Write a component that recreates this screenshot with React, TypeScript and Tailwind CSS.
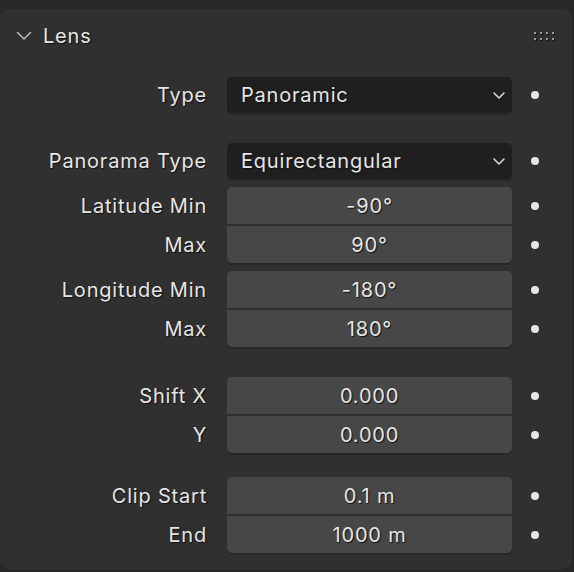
import React from 'react';

type Row = { label: string; value: string };

const font = { fontFamily: 'Inter, "Noto Sans", sans-serif' };

function Dot() {
  return (
    <div className="flex w-[60px] items-center pl-[19px]">
      <div className="h-[8px] w-[8px] rounded-full bg-[#e6e6e6]" />
    </div>
  );
}

function Label({ text }: { text: string }) {
  return (
    <div className="flex w-[227px] shrink-0 items-center justify-end pr-[20px] text-[20px] tracking-[0.8px] text-[#e6e6e6] [text-shadow:1px_1px_1px_#111]">
      {text}
    </div>
  );
}

function EnumRow({ label, value }: { label: string; value: string }) {
  return (
    <div className="flex h-[36px]">
      <Label text={label} />
      <div className="flex w-[286px] items-center justify-between rounded-[5px] bg-[#1f1f1f] pl-[14px] pr-[6px] text-[20px] tracking-[0.8px] text-[#e6e6e6] shadow-[0_2px_0_#282828] [text-shadow:1px_1px_1px_#111]">
        <span>{value}</span>
        <svg width="14" height="10" viewBox="0 0 14 10">
          <path d="M2 3 L7 8 L12 3" fill="none" stroke="#d8d8d8" strokeWidth="1.6" strokeLinecap="round" strokeLinejoin="round" />
        </svg>
      </div>
      <Dot />
    </div>
  );
}

function NumGroup({ rows }: { rows: Row[] }) {
  return (
    <div className="flex flex-col gap-[2px]">
      {rows.map((r, i) => {
        const first = i === 0;
        const last = i === rows.length - 1;
        return (
          <div key={r.label} className="flex h-[37px]">
            <Label text={r.label} />
            <div
              className={
                'flex w-[286px] items-center justify-center bg-[#474747] text-[20px] tracking-[0.8px] text-[#e6e6e6] [text-shadow:1px_1px_1px_#111] ' +
                (first ? 'rounded-t-[5px] ' : '') +
                (last ? 'rounded-b-[5px] shadow-[0_2px_0_#282828]' : '')
              }
            >
              {r.value}
            </div>
            <Dot />
          </div>
        );
      })}
    </div>
  );
}

export default function App() {
  return (
    <div className="h-[572px] w-[574px] bg-[#282828] pt-[9px]" style={font}>
      <div className="h-[560px] w-[572px] rounded-[10px] bg-[#303030]">
        <div className="flex h-[54px] items-center justify-between pl-[16px] pr-[16px]">
          <div className="flex items-center gap-[11px]">
            <svg width="16" height="10" viewBox="0 0 16 10">
              <path d="M1.5 1.5 L8 8 L14.5 1.5" fill="none" stroke="#b8b8b8" strokeWidth="1.6" strokeLinecap="round" strokeLinejoin="round" />
            </svg>
            <span className="text-[20px] tracking-[0.8px] text-[#e6e6e6] [text-shadow:1px_1px_1px_#111]">Lens</span>
          </div>
          <div className="grid grid-cols-4 gap-x-[4px] gap-y-[4px] pr-[2px]">
            {Array.from({ length: 8 }).map((_, i) => (
              <div key={i} className="h-[2px] w-[2px] bg-[#9a9a9a] shadow-[1px_1px_0_#111]" />
            ))}
          </div>
        </div>

        <div className="mt-[14px] flex flex-col">
          <EnumRow label="Type" value="Panoramic" />
          <div className="mt-[30px]">
            <EnumRow label="Panorama Type" value="Equirectangular" />
          </div>
          <div className="mt-[8px]">
            <NumGroup
              rows={[
                { label: 'Latitude Min', value: '-90°' },
                { label: 'Max', value: '90°' },
              ]}
            />
          </div>
          <div className="mt-[8px]">
            <NumGroup
              rows={[
                { label: 'Longitude Min', value: '-180°' },
                { label: 'Max', value: '180°' },
              ]}
            />
          </div>
          <div className="mt-[30px]">
            <NumGroup
              rows={[
                { label: 'Shift X', value: '0.000' },
                { label: 'Y', value: '0.000' },
              ]}
            />
          </div>
          <div className="mt-[24px]">
            <NumGroup
              rows={[
                { label: 'Clip Start', value: '0.1 m' },
                { label: 'End', value: '1000 m' },
              ]}
            />
          </div>
        </div>
      </div>
    </div>
  );
}
